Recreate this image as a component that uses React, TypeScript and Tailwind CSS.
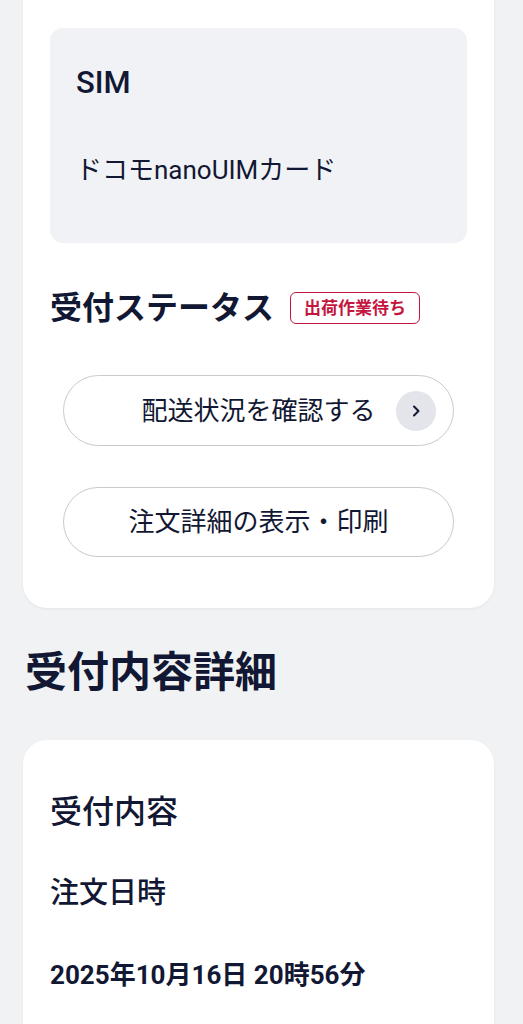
import React from "react";

const FONT = { fontFamily: 'Roboto, "Noto Sans CJK JP", "Noto Sans", sans-serif' };

export default function App() {
  return (
    <div className="min-h-[1024px] w-full bg-[#f1f2f4] text-[#121833]" style={FONT}>
      <div className="ml-[23px] w-[471px] rounded-b-[24px] bg-white px-[27px] pt-[28px] pb-[51px] shadow-[0_1px_3px_rgba(0,0,0,0.06)]">
        <div className="h-[215px] rounded-[13px] bg-[#f1f2f5] px-[26px] pt-[35px]">
          <div className="text-[31px] font-medium leading-[40px]">SIM</div>
          <div className="mt-[49px] text-[26px] font-normal leading-[36px]">ドコモnanoUIMカード</div>
        </div>

        <div className="mt-[43px] flex h-[44px] items-center gap-[16px]">
          <h2 className="text-[32px] font-bold leading-[44px]">受付ステータス</h2>
          <span className="flex h-[32px] items-center rounded-[6px] border-[1.5px] border-[#c4163f] px-[13px] text-[17px] font-bold leading-none text-[#c4163f]">
            出荷作業待ち
          </span>
        </div>

        <div className="mt-[45px] flex flex-col gap-[41px] px-[13px]">
          <button className="relative flex h-[71px] w-full items-center justify-center rounded-full border border-[#c9cacf] bg-white text-[26px] leading-none text-[#121833]">
            配送状況を確認する
            <span className="absolute right-[17px] top-1/2 flex h-[40px] w-[40px] -translate-y-1/2 items-center justify-center rounded-full bg-[#e4e5ea]">
              <svg width="14" height="14" viewBox="0 0 14 14" fill="none">
                <path d="M5 2.5L9.5 7L5 11.5" stroke="#121833" strokeWidth="2" strokeLinecap="round" strokeLinejoin="round" />
              </svg>
            </span>
          </button>
          <button className="flex h-[70px] w-full items-center justify-center rounded-full border border-[#c9cacf] bg-white text-[26px] leading-none text-[#121833]">
            注文詳細の表示・印刷
          </button>
        </div>
      </div>

      <h1 className="ml-[25px] mt-[37px] text-[42px] font-bold leading-[56px]">受付内容詳細</h1>

      <div className="ml-[23px] mt-[39px] w-[471px] rounded-t-[24px] bg-white px-[27px] pt-[50px] pb-[60px] shadow-[0_1px_3px_rgba(0,0,0,0.06)]">
        <h3 className="text-[32px] font-medium leading-[44px]">受付内容</h3>
        <div className="mt-[39px] text-[29px] font-medium leading-[40px]">注文日時</div>
        <div className="mt-[44px] text-[26px] font-bold leading-[36px]">2025年10月16日 20時56分</div>
      </div>
    </div>
  );
}
